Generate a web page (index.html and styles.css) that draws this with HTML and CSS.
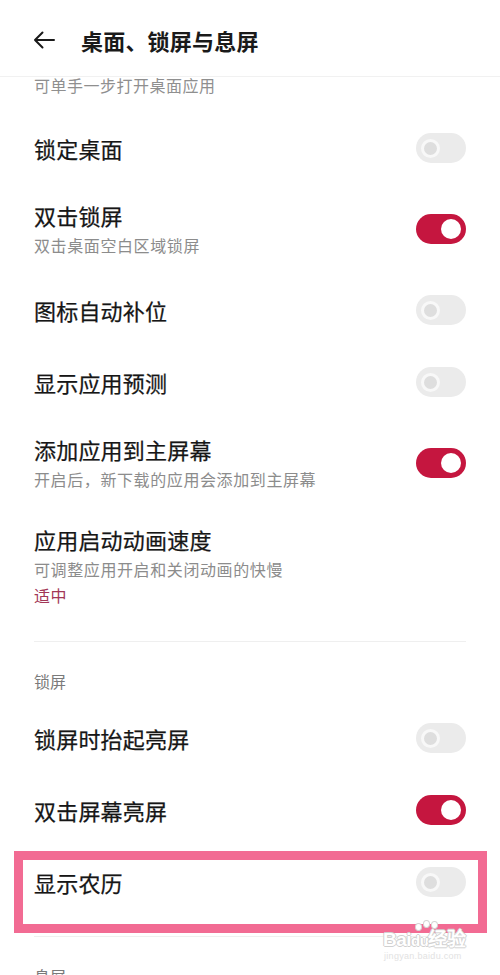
FILE: index.html
```html
<!DOCTYPE html>
<html lang="zh-CN">
<head>
<meta charset="utf-8">
<title>桌面、锁屏与息屏</title>
<link rel="stylesheet" href="styles.css">
</head>
<body>
<div class="screen">
  <header class="topbar">
    <svg class="back" width="22" height="18" viewBox="0 0 22 18" aria-hidden="true">
      <path d="M21 9H2M9.5 1.5L2 9l7.5 7.5" fill="none" stroke="#1a1a1a" stroke-width="2" stroke-linecap="round" stroke-linejoin="round"/>
    </svg>
    <h1 class="title">桌面、锁屏与息屏</h1>
  </header>

  <div class="list">
    <div class="remnant">可单手一步打开桌面应用</div>

    <div class="row">
      <div class="text"><div class="name">锁定桌面</div></div>
      <span class="toggle off"><span class="knob"></span></span>
    </div>

    <div class="row two">
      <div class="text"><div class="name">双击锁屏</div><div class="desc">双击桌面空白区域锁屏</div></div>
      <span class="toggle on"><span class="knob"></span></span>
    </div>

    <div class="row">
      <div class="text"><div class="name">图标自动补位</div></div>
      <span class="toggle off"><span class="knob"></span></span>
    </div>

    <div class="row">
      <div class="text"><div class="name">显示应用预测</div></div>
      <span class="toggle off"><span class="knob"></span></span>
    </div>

    <div class="row two">
      <div class="text"><div class="name">添加应用到主屏幕</div><div class="desc">开启后，新下载的应用会添加到主屏幕</div></div>
      <span class="toggle on"><span class="knob"></span></span>
    </div>

    <div class="row two last">
      <div class="text"><div class="name">应用启动动画速度</div><div class="desc">可调整应用开启和关闭动画的快慢</div><div class="value">适中</div></div>
    </div>

    <div class="divider"></div>
    <div class="section">锁屏</div>

    <div class="row">
      <div class="text"><div class="name">锁屏时抬起亮屏</div></div>
      <span class="toggle off"><span class="knob"></span></span>
    </div>

    <div class="row">
      <div class="text"><div class="name">双击屏幕亮屏</div></div>
      <span class="toggle on"><span class="knob"></span></span>
    </div>

    <div class="row end">
      <div class="text"><div class="name">显示农历</div></div>
      <span class="toggle off"><span class="knob"></span></span>
    </div>

    <div class="divider"></div>
    <div class="section">息屏</div>
  </div>

  <div class="highlight"></div>
  <div class="watermark">
    <div class="wm-paw"><span></span><span></span><span></span></div>
    <div class="wm-logo">Bai<span class="du">du</span>经验</div>
    <div class="wm-url">jingyan.baidu.com</div>
  </div>
</div>
</body>
</html>
```

FILE: styles.css
```css
* { box-sizing: border-box; }
html, body { margin: 0; padding: 0; background: #fff; }
body {
  font-family: "Noto Sans CJK SC", "Noto Sans", sans-serif;
  color: #1c1c1c;
  width: 500px;
  height: 975px;
  overflow: hidden;
}
.screen { position: relative; width: 500px; height: 975px; overflow: hidden; }

.topbar {
  display: flex;
  align-items: center;
  height: 77px;
  padding: 3px 0 0 33px;
  border-bottom: 1px solid #f1f1f1;
}
.back { flex: none; width: 22px; height: 18px; }
.title {
  margin: 0 0 0 26px;
  font-size: 22px;
  font-weight: 700;
  line-height: 30px;
  color: #1a1a1a;
  letter-spacing: 0.2px;
}

.list { padding: 0 34px; }

.remnant {
  font-size: 16px;
  line-height: 20px;
  color: #8f8f8f;
  letter-spacing: 0.5px;
  padding-bottom: 17px;
  margin-top: -2px;
}

.row {
  display: flex;
  align-items: center;
  justify-content: space-between;
  min-height: 72px;
}
.row.two { padding: 16px 0; }
.row.last { padding-bottom: 33px; }
.row.end { padding-bottom: 18px; min-height: 90px; align-items: flex-start; padding-top: 21px; }

.name {
  font-size: 22px;
  font-weight: 400;
  line-height: 30px;
  color: #161616;
  letter-spacing: 0.2px;
  -webkit-text-stroke: 0.25px #161616;
}
.desc, .value {
  font-size: 16px;
  line-height: 26px;
  color: #8c8c8c;
  letter-spacing: 0.6px;
}
.desc { margin-top: 2px; }
.value { color: #a23757; }

.divider { height: 1px; background: #efefef; }
.section {
  font-size: 16px;
  line-height: 22px;
  color: #7a7a7a;
  padding: 28px 0 10px;
}

.toggle {
  flex: none;
  position: relative;
  display: flex;
  align-items: center;
  width: 50px;
  height: 30px;
  border-radius: 15px;
  padding: 0 5px;
}
.toggle .knob {
  display: block;
  width: 19px;
  height: 19px;
  border-radius: 50%;
}
.toggle.off { background: #ebebeb; justify-content: flex-start; }
.toggle.off .knob { background: #dedede; border: 3.5px solid #f8f8f8; }
.toggle.on { background: #c5163f; justify-content: flex-end; }
.toggle.on .knob { background: #fff; width: 20px; height: 20px; }

.highlight {
  position: absolute;
  left: 14px;
  top: 851px;
  width: 473px;
  height: 82px;
  border: 9px solid #f26b93;
  pointer-events: none;
}

.watermark {
  position: absolute;
  left: 382px;
  top: 920px;
  width: 95px;
  height: 44px;
  font-family: "Liberation Sans", sans-serif;
}
.wm-paw { position: absolute; left: 33px; top: 0; width: 26px; height: 10px; }
.wm-paw span {
  position: absolute;
  width: 7px; height: 8px;
  border-radius: 50%;
  background: #fff;
  border: 1.5px solid #d4d4d4;
}
.wm-paw span:nth-child(1) { left: 0; top: 3px; }
.wm-paw span:nth-child(2) { left: 8px; top: 0; }
.wm-paw span:nth-child(3) { left: 16px; top: 1px; }
.wm-logo {
  position: absolute;
  left: 1px;
  top: 9px;
  font-size: 19px;
  font-weight: 700;
  line-height: 22px;
  color: #fff;
  letter-spacing: -0.5px;
  text-shadow: 1px 0 #d0d0d0, -1px 0 #d0d0d0, 0 1px #d0d0d0, 0 -1px #d0d0d0;
  white-space: nowrap;
}
.wm-logo .du { font-size: 15px; }
.wm-url {
  position: absolute;
  left: 2px;
  top: 31px;
  font-size: 9px;
  line-height: 11px;
  color: #e2e2e2;
  letter-spacing: 0.3px;
  white-space: nowrap;
}
```
